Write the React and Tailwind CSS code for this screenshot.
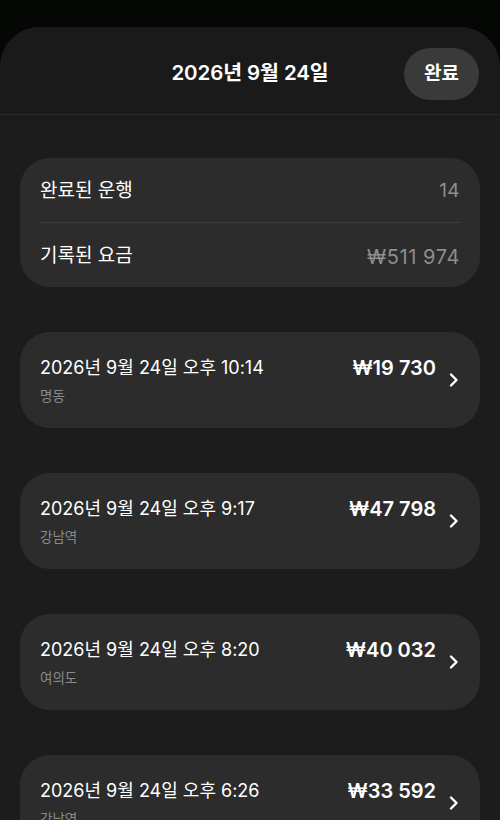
import React from "react";

const trips = [
  { time: "2026년 9월 24일 오후 10:14", place: "명동", amount: "₩19 730" },
  { time: "2026년 9월 24일 오후 9:17", place: "강남역", amount: "₩47 798" },
  { time: "2026년 9월 24일 오후 8:20", place: "여의도", amount: "₩40 032" },
  { time: "2026년 9월 24일 오후 6:26", place: "강남역", amount: "₩33 592" },
];

function Chevron() {
  return (
    <svg width="12" height="16" viewBox="0 0 12 16" fill="none" className="shrink-0">
      <path d="M3 2.5 L8.5 8 L3 13.5" stroke="#ffffff" strokeWidth="2.4" strokeLinecap="round" strokeLinejoin="round" />
    </svg>
  );
}

export default function App() {
  return (
    <div
      className="w-[500px] h-[820px] overflow-hidden bg-[#040704] pt-[27px]"
      style={{ fontFamily: '"Inter", "Noto Sans CJK KR", sans-serif' }}
    >
      <div className="h-full rounded-t-[40px] bg-[#1c1c1c] overflow-hidden">
        <div className="relative h-[88px] bg-[#1a1a1a] border-b border-[#2a2a2a] flex items-center justify-center pt-[6px]">
          <div className="text-white text-[20.5px] font-semibold tracking-[-0.1px]">2026년 9월 24일</div>
          <div className="absolute right-[21px] top-[21px] w-[75px] h-[52px] rounded-full bg-[#3a3a3a] flex items-center justify-center text-white text-[19px] font-semibold">
            완료
          </div>
        </div>

        <div className="px-[20px] pt-[43px] flex flex-col gap-[45px]">
          <div className="rounded-[30px] bg-[#2c2c2c] px-[20px]">
            <div className="h-[64px] pt-[3px] flex items-center justify-between">
              <span className="text-white text-[19px]">완료된 운행</span>
              <span className="text-[#8e8e8e] text-[19px] tracking-[0.4px]">14</span>
            </div>
            <div className="h-px bg-[#3c3c3c]" />
            <div className="h-[64px] pt-[3px] flex items-center justify-between">
              <span className="text-white text-[19px]">기록된 요금</span>
              <span className="text-[#8e8e8e] text-[20px] tracking-[0.6px]">₩511 974</span>
            </div>
          </div>

          {trips.map((t, i) => (
            <div key={i} className="h-[96px] shrink-0 rounded-[30px] bg-[#2c2c2c] pl-[20px] pr-[20px] flex items-center">
              <div className="flex-1 flex flex-col self-start pt-[24px]">
                <div className="flex items-center justify-between">
                  <span className="text-white text-[18px] leading-[24px]">{t.time}</span>
                  <span className="text-white text-[20px] font-semibold leading-[24px]">{t.amount}</span>
                </div>
                <span className="text-[#8a8a8a] text-[13.5px] leading-[18px] mt-[7px]">{t.place}</span>
              </div>
              <div className="ml-[12px] flex items-center">
                <Chevron />
              </div>
            </div>
          ))}
        </div>
      </div>
    </div>
  );
}
